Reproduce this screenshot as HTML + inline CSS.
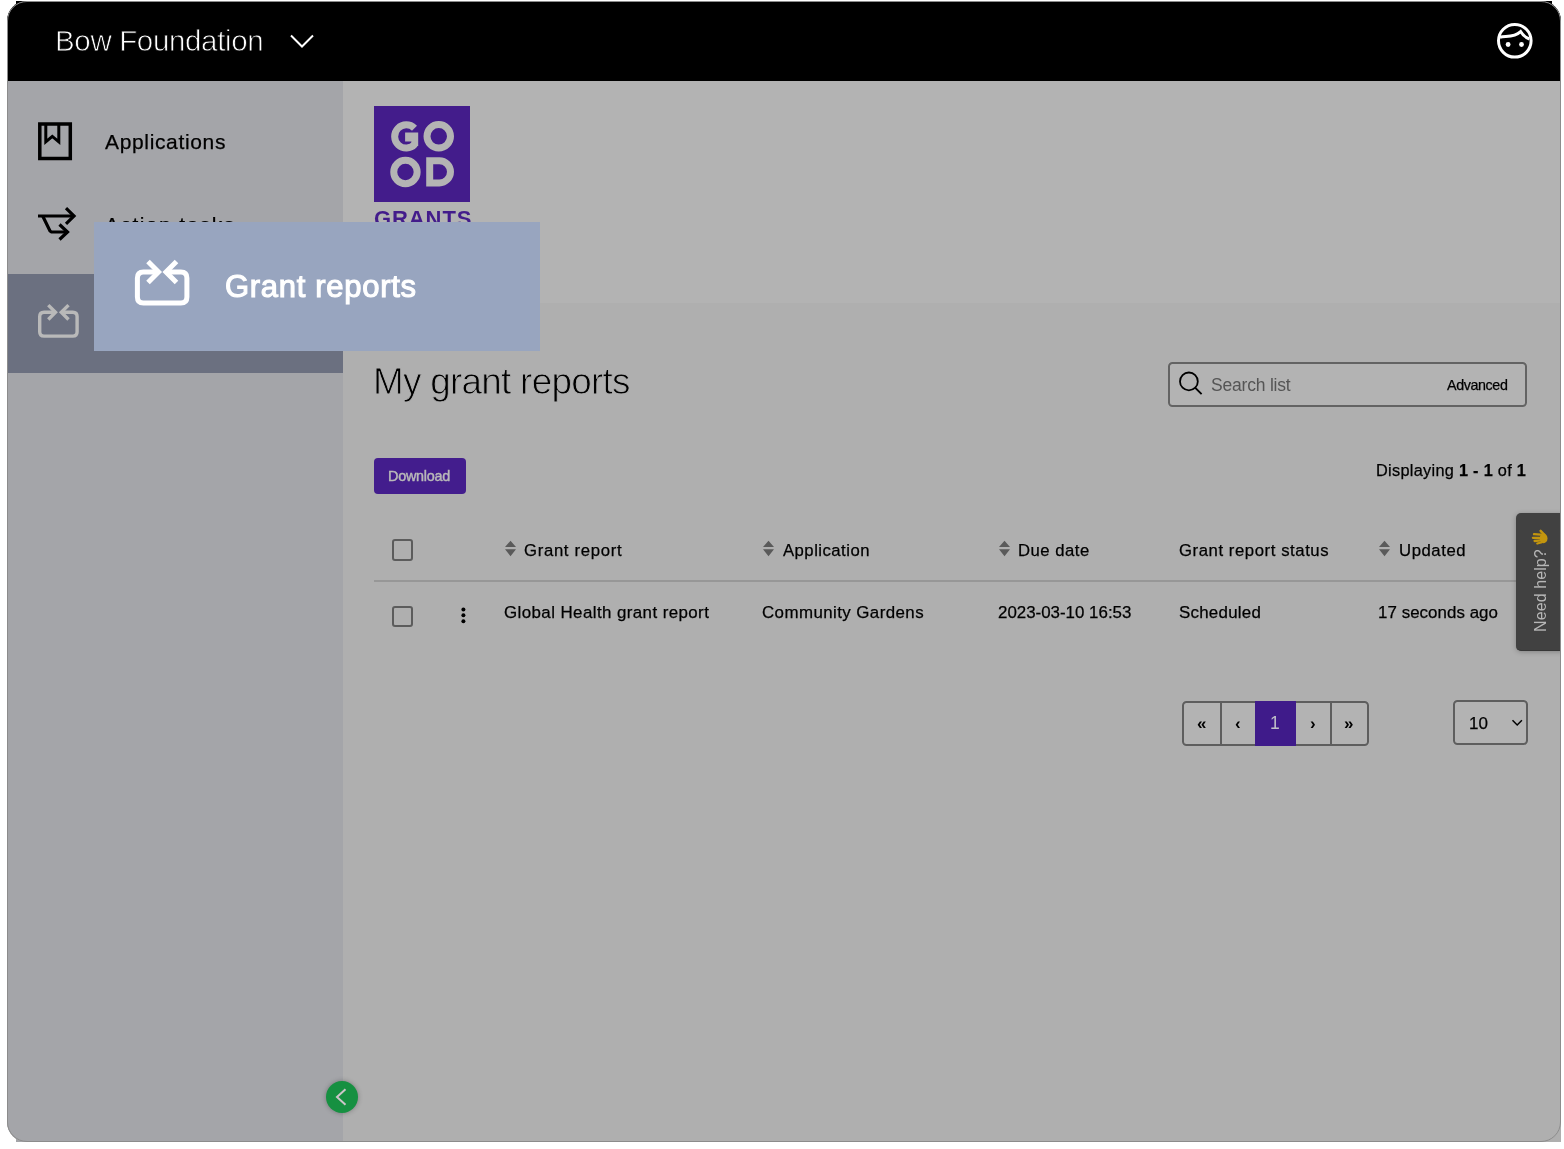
<!DOCTYPE html>
<html><head><meta charset="utf-8">
<style>
html,body{margin:0;padding:0;}
body{width:1564px;height:1149px;background:#fff;position:relative;overflow:hidden;font-family:"Liberation Sans",sans-serif;-webkit-font-smoothing:antialiased;}
.win{position:absolute;left:7px;top:1px;width:1554px;height:1141px;border-radius:20px;overflow:hidden;background:#afafaf;}
.pg{position:absolute;left:-7px;top:-1px;width:1564px;height:1149px;}
.frame{position:absolute;left:7px;top:1px;width:1554px;height:1141px;border-radius:20px;box-sizing:border-box;border:1px solid #8c8c8c;pointer-events:none;}
.a{position:absolute;white-space:nowrap;}
.t{line-height:1;will-change:transform;}
.tb{-webkit-text-stroke:0.25px #000;}
.cb{position:absolute;width:17.4px;height:17.4px;border:2px solid #5c5c5c;border-radius:3px;box-sizing:content-box;}
</style></head>
<body>
<div class="a" style="left:16px;top:1px;width:1536px;height:30px;background:#000;"></div>
<div class="a" style="left:16px;top:1112px;width:40px;height:30px;background:#a4a5a9;"></div>
<div class="a" style="left:1520px;top:1112px;width:41px;height:30px;background:#afafaf;"></div>
<div class="win"><div class="pg">
<div class="a" style="left:0;top:0;width:1564px;height:81px;background:#000;"></div>
<div class="a" style="left:0;top:81px;width:343px;height:1070px;background:#a4a5a9;"></div>
<div class="a" style="left:0;top:274px;width:343px;height:99px;background:#6b7080;"></div>
<div class="a" style="left:343px;top:81px;width:1221px;height:222px;background:#b3b3b3;"></div>
<div class="a" style="left:343px;top:303px;width:1221px;height:850px;background:#afafaf;"></div>
<div class="a t " style="left:54.60px;top:25.93px;font-size:29.5px;letter-spacing:-0.35px;color:#fff;font-weight:400;-webkit-text-stroke:0.8px #000;">Bow Foundation</div>
<svg class="a" style="left:286px;top:30px" width="32" height="22" viewBox="0 0 32 22"><polyline points="5,5.5 16,16.5 27,5.5" fill="none" stroke="#fff" stroke-width="2"/></svg>
<svg class="a" style="left:1494px;top:20px" width="42" height="42" viewBox="0 0 42 42">
<circle cx="20.8" cy="20.8" r="16.3" fill="none" stroke="#fff" stroke-width="3"/>
<path d="M6,17.2 C12,15.8 20,17.8 26.6,11.6 C29,15.6 31.5,17.6 35.5,19" fill="none" stroke="#fff" stroke-width="3"/>
<circle cx="14.1" cy="24.5" r="2.4" fill="#fff"/><circle cx="27.5" cy="24.5" r="2.4" fill="#fff"/>
</svg>
<svg class="a" style="left:30px;top:115px" width="50" height="52" viewBox="0 0 50 52">
<rect x="9.8" y="9" width="30.5" height="34.5" fill="none" stroke="#000" stroke-width="3.5"/>
<polyline points="15.8,10 15.8,26.8 22.3,21.4 28.8,26.8 28.8,10" fill="none" stroke="#000" stroke-width="3"/>
</svg>
<div class="a t tb" style="left:105.00px;top:131.42px;font-size:21px;letter-spacing:0.65px;color:#000;font-weight:400;">Applications</div>
<svg class="a" style="left:30px;top:200px" width="50" height="45" viewBox="0 0 50 45">
<polyline points="8,16 44,16" fill="none" stroke="#000" stroke-width="3.2"/>
<polyline points="36,8.2 44,16 36,23.8" fill="none" stroke="#000" stroke-width="3.2"/>
<polyline points="12.7,16 20,31 21.5,32 38,32" fill="none" stroke="#000" stroke-width="3.2"/>
<polyline points="29.5,24.5 37.5,32 29.5,39.5" fill="none" stroke="#000" stroke-width="3.2"/>
</svg>
<div class="a t tb" style="left:105.00px;top:214.43px;font-size:21px;letter-spacing:1.45px;color:#000;font-weight:400;">Action tasks</div>
<svg class="a" style="left:30px;top:295px" width="56" height="50" viewBox="0 0 56 50">
<path d="M25.5,17.3 H14 Q9.7,17.3 9.7,21.6 V36.8 Q9.7,41.1 14,41.1 H42.8 Q47.1,41.1 47.1,36.8 V21.6 Q47.1,17.3 42.8,17.3 H31.3" fill="none" stroke="#b9b9b9" stroke-width="3.4"/>
<polyline points="18.3,10.1 25.5,17.3 18.3,24.5" fill="none" stroke="#b9b9b9" stroke-width="3.4"/>
<polyline points="38.5,10.1 31.3,17.3 38.5,24.5" fill="none" stroke="#b9b9b9" stroke-width="3.4"/>
</svg>
<svg class="a" style="left:374px;top:106px" width="96" height="96" viewBox="374 106 96 96">
<rect x="374" y="106" width="96" height="96" fill="#431c8b"/>
<g fill="none" stroke="#b4b4b4" stroke-width="7">
<path d="M414.5,128.3 A11.6,11.6 0 1 0 414.9,144.2"/>
<circle cx="438.75" cy="136.3" r="11.75"/>
<circle cx="405.45" cy="171.95" r="11.7"/>
<path d="M429.7,160.7 H439.4 A11.1,11.1 0 0 1 439.4,182.9 H429.7 Z"/>
</g>
<path d="M405.1,132.4 H418.2 V146 H411.4 V141.5 H405.1 Z" fill="#b4b4b4"/>
</svg>
<div class="a t " style="left:373.50px;top:207.68px;font-size:22px;letter-spacing:0.9px;color:#431c8b;font-weight:700;">GRANTS</div>
<div class="a" style="left:94px;top:222px;width:446px;height:129px;background:#98a5bf;"></div>
<svg class="a" style="left:125px;top:250px" width="76" height="66" viewBox="0 0 76 66">
<path d="M33.5,22 H18.4 Q12.4,22 12.4,28 V47 Q12.4,53 18.4,53 H55.9 Q61.9,53 61.9,47 V28 Q61.9,22 55.9,22 H41" fill="none" stroke="#fff" stroke-width="5"/>
<polyline points="23,11.5 33.5,22 23,32.5" fill="none" stroke="#fff" stroke-width="5"/>
<polyline points="51.5,11.5 41,22 51.5,32.5" fill="none" stroke="#fff" stroke-width="5"/>
</svg>
<div class="a t " style="left:224.80px;top:270.76px;font-size:31px;letter-spacing:0.7px;color:#fff;font-weight:400;-webkit-text-stroke:1.1px #fff;">Grant reports</div>
<div class="a t " style="left:373.00px;top:363.56px;font-size:36.9px;letter-spacing:-0.74px;color:#000;font-weight:400;-webkit-text-stroke:0.9px #afafaf;">My grant reports</div>
<div class="a" style="left:1168px;top:362px;width:359px;height:44.5px;box-sizing:border-box;border:2px solid #636363;border-radius:4.5px;background:#b3b3b3;"></div>
<svg class="a" style="left:1174px;top:366px" width="34" height="34" viewBox="1174 366 34 34">
<circle cx="1188.9" cy="381.4" r="8.9" fill="none" stroke="#000" stroke-width="1.8"/>
<line x1="1195.3" y1="387.8" x2="1201.6" y2="394.2" stroke="#000" stroke-width="1.9"/>
</svg>
<div class="a t " style="left:1210.80px;top:376.69px;font-size:17.5px;letter-spacing:-0.2px;color:#555;font-weight:400;">Search list</div>
<div class="a t tb" style="left:1447.00px;top:377.90px;font-size:14.3px;letter-spacing:-0.39px;color:#000;font-weight:400;">Advanced</div>
<div class="a" style="left:374px;top:458px;width:92px;height:36px;background:#431d8d;border-radius:4px;"></div>
<div class="a t " style="left:387.80px;top:468.81px;font-size:14.4px;letter-spacing:-0.25px;color:#b9b9b9;font-weight:400;-webkit-text-stroke:0.45px #b9b9b9;">Download</div>
<div class="a t tb" style="left:1375.50px;top:461.50px;font-size:16.3px;letter-spacing:0.3px;color:#000;font-weight:400;">Displaying <b>1 - 1</b> of <b>1</b></div>
<div class="cb" style="left:391.7px;top:539.3px;"></div>
<div class="cb" style="left:391.7px;top:606px;"></div>
<div class="a" style="left:374px;top:580.3px;width:1153px;height:2px;background:#979797;"></div>
<svg class="a" style="left:458px;top:604px" width="11" height="22" viewBox="458 604 11 22"><circle cx="463.4" cy="609.4" r="2" fill="#000"/><circle cx="463.4" cy="615.3" r="2" fill="#000"/><circle cx="463.4" cy="621.3" r="2" fill="#000"/></svg>
<svg class="a" style="left:504.00px;top:540px" width="13" height="17" viewBox="0 0 13 17"><path d="M1,7.1 L6.5,0.8 L12,7.1Z M1,9.3 L6.5,16.2 L12,9.3Z" fill="#5a5a5a"/></svg>
<svg class="a" style="left:761.90px;top:540px" width="13" height="17" viewBox="0 0 13 17"><path d="M1,7.1 L6.5,0.8 L12,7.1Z M1,9.3 L6.5,16.2 L12,9.3Z" fill="#5a5a5a"/></svg>
<svg class="a" style="left:997.80px;top:540px" width="13" height="17" viewBox="0 0 13 17"><path d="M1,7.1 L6.5,0.8 L12,7.1Z M1,9.3 L6.5,16.2 L12,9.3Z" fill="#5a5a5a"/></svg>
<svg class="a" style="left:1378.20px;top:540px" width="13" height="17" viewBox="0 0 13 17"><path d="M1,7.1 L6.5,0.8 L12,7.1Z M1,9.3 L6.5,16.2 L12,9.3Z" fill="#5a5a5a"/></svg>
<div class="a t tb" style="left:524.20px;top:542.86px;font-size:16.7px;letter-spacing:0.69px;color:#000;font-weight:400;">Grant report</div>
<div class="a t tb" style="left:782.70px;top:542.86px;font-size:16.7px;letter-spacing:0.48px;color:#000;font-weight:400;">Application</div>
<div class="a t tb" style="left:1017.50px;top:542.86px;font-size:16.7px;letter-spacing:0.5px;color:#000;font-weight:400;">Due date</div>
<div class="a t tb" style="left:1179.30px;top:542.86px;font-size:16.7px;letter-spacing:0.58px;color:#000;font-weight:400;">Grant report status</div>
<div class="a t tb" style="left:1398.70px;top:542.86px;font-size:16.7px;letter-spacing:0.58px;color:#000;font-weight:400;">Updated</div>
<div class="a t tb" style="left:503.80px;top:604.69px;font-size:16.9px;letter-spacing:0.42px;color:#000;font-weight:400;">Global Health grant report</div>
<div class="a t tb" style="left:761.70px;top:604.69px;font-size:16.9px;letter-spacing:0.42px;color:#000;font-weight:400;">Community Gardens</div>
<div class="a t tb" style="left:997.60px;top:604.69px;font-size:16.9px;letter-spacing:0px;color:#000;font-weight:400;">2023-03-10 16:53</div>
<div class="a t tb" style="left:1179.20px;top:604.69px;font-size:16.9px;letter-spacing:0.25px;color:#000;font-weight:400;">Scheduled</div>
<div class="a t tb" style="left:1378.40px;top:604.69px;font-size:16.9px;letter-spacing:0.05px;color:#000;font-weight:400;">17 seconds ago</div>
<div class="a" style="left:1516px;top:512.8px;width:48px;height:138px;box-sizing:border-box;background:#414141;border-bottom:1.5px solid #373737;border-radius:5px 0 0 5px;box-shadow:0 1px 5px rgba(0,0,0,0.25);"></div>
<div class="a t" style="left:1532.96px;top:632px;font-size:16px;letter-spacing:0.1px;color:#b6b6b6;transform:rotate(-90deg);transform-origin:0 0;">Need help?</div>
<svg class="a" style="left:1526px;top:522px" width="28" height="28" viewBox="0 0 28 28">
<g stroke="#c3950e" stroke-linecap="round" fill="none">
<line x1="15" y1="12.6" x2="8" y2="12.2" stroke-width="2.3"/>
<line x1="15" y1="15.8" x2="6.9" y2="15.8" stroke-width="2.3"/>
<line x1="15" y1="18.4" x2="8.6" y2="19" stroke-width="2.3"/>
<line x1="16" y1="20.3" x2="11.2" y2="21.6" stroke-width="2.1"/>
<line x1="18.2" y1="12.6" x2="14.6" y2="8.8" stroke-width="2.4"/>
</g>
<ellipse cx="17.6" cy="16.4" rx="3.9" ry="4.9" fill="#c3950e"/>
</svg>
<div class="a" style="left:1182px;top:701px;width:186.5px;height:45px;box-sizing:border-box;border:2px solid #5e5e5e;border-radius:4.5px;overflow:hidden;background:#b3b3b3;">
<div class="a" style="left:36.4px;top:0;width:2px;height:45px;background:#5e5e5e;"></div>
<div class="a" style="left:146px;top:0;width:2px;height:45px;background:#5e5e5e;"></div>
</div>
<div class="a" style="left:1255.2px;top:700.8px;width:40.4px;height:45px;background:#3f1b8a;"></div>
<div class="a t " style="left:1196.50px;top:715.11px;font-size:17px;letter-spacing:0px;color:#000;font-weight:700;">«</div>
<div class="a t " style="left:1235.00px;top:715.11px;font-size:17px;letter-spacing:0px;color:#000;font-weight:700;">‹</div>
<div class="a t " style="left:1270.00px;top:715.39px;font-size:17.5px;letter-spacing:0px;color:#c0c0c8;font-weight:400;">1</div>
<div class="a t " style="left:1309.50px;top:715.11px;font-size:17px;letter-spacing:0px;color:#000;font-weight:700;">›</div>
<div class="a t " style="left:1344.00px;top:715.11px;font-size:17px;letter-spacing:0px;color:#000;font-weight:700;">»</div>
<div class="a" style="left:1452.6px;top:700px;width:75px;height:44.8px;box-sizing:border-box;border:2px solid #5e5e5e;border-radius:4.5px;background:#b3b3b3;"></div>
<div class="a t tb" style="left:1468.50px;top:714.61px;font-size:17px;letter-spacing:0px;color:#000;font-weight:400;">10</div>
<svg class="a" style="left:1508px;top:714px" width="18" height="16" viewBox="1508 714 18 16"><polyline points="1512.5,720.3 1517.2,725 1521.9,720.3" fill="none" stroke="#000" stroke-width="1.5"/></svg>
<div class="a" style="left:326px;top:1081px;width:32px;height:32px;border-radius:50%;background:#169041;box-shadow:0 0 5px rgba(0,0,0,0.3);"></div>
<svg class="a" style="left:326px;top:1081px" width="32" height="32" viewBox="0 0 32 32"><polyline points="19.5,8.3 11,16 19.5,23.7" fill="none" stroke="#cdc5c9" stroke-width="2"/></svg>
</div></div>
<div class="frame"></div>
</body></html>
